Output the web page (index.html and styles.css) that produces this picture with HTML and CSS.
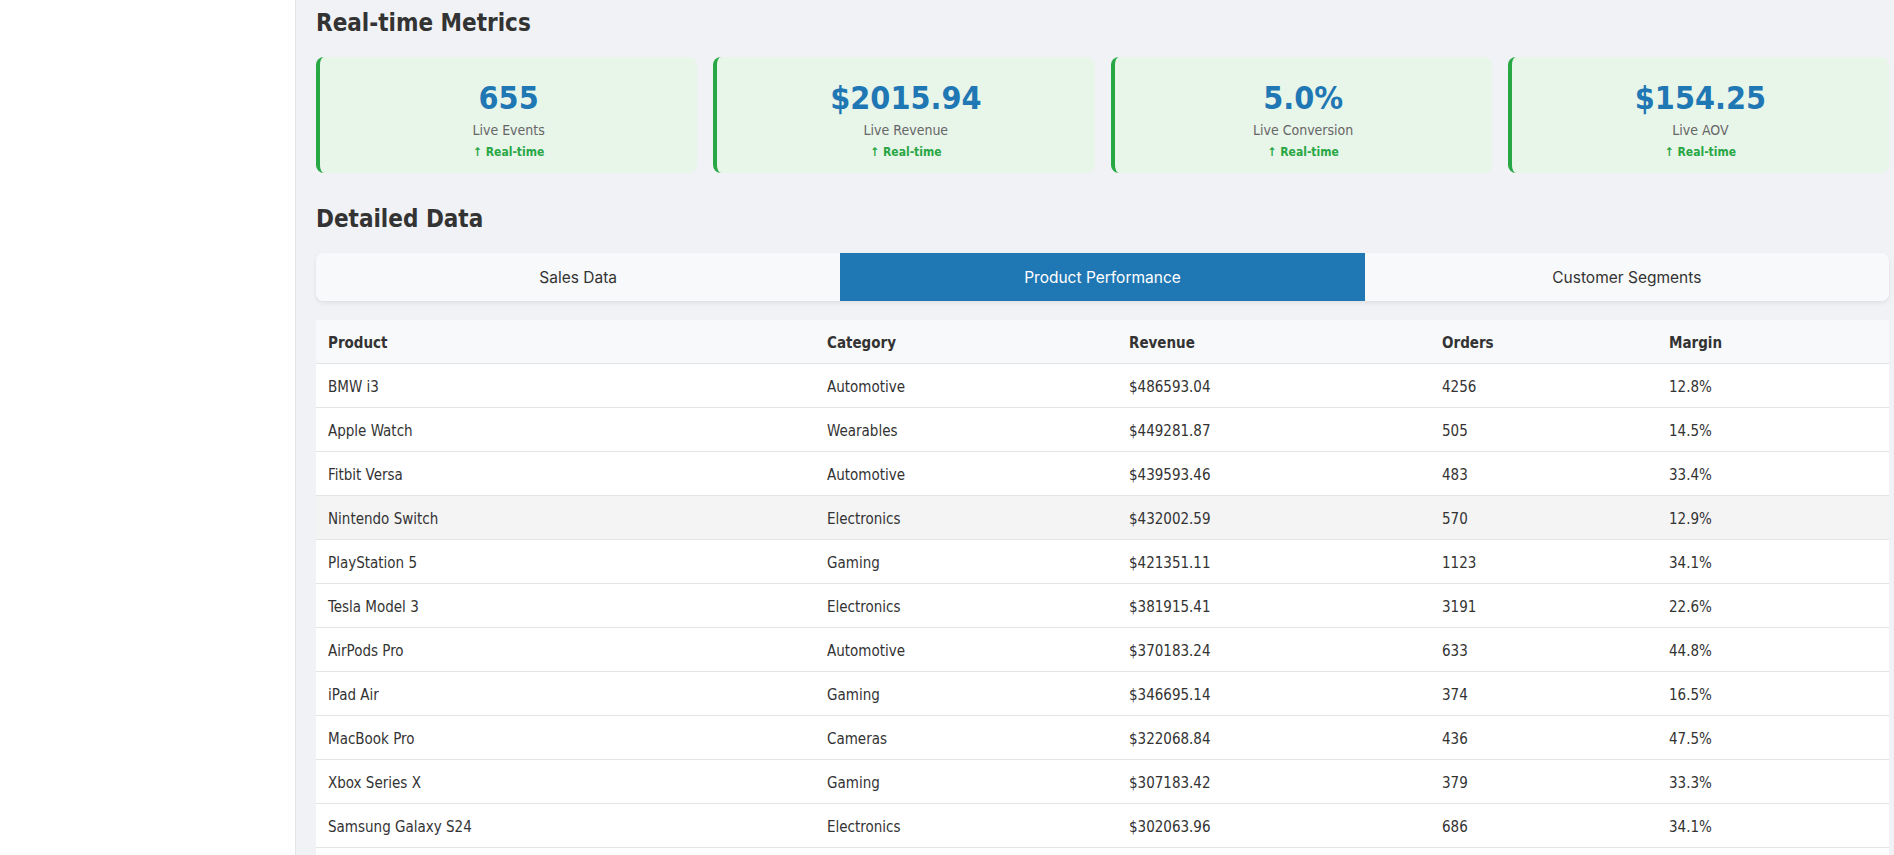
FILE: index.html
```html
<!DOCTYPE html>
<html lang="en">
<head>
<meta charset="utf-8">
<title>Real-time Dashboard</title>
<link rel="stylesheet" href="styles.css">
</head>
<body>
<div class="app">
  <aside class="sidebar"></aside>
  <main class="main">
    <h2 class="section-title first">Real-time Metrics</h2>
    <div class="metrics">
      <div class="metric-card">
        <div class="metric-value">655</div>
        <div class="metric-label">Live Events</div>
        <div class="metric-change">↑ Real-time</div>
      </div>
      <div class="metric-card">
        <div class="metric-value">$2015.94</div>
        <div class="metric-label">Live Revenue</div>
        <div class="metric-change">↑ Real-time</div>
      </div>
      <div class="metric-card">
        <div class="metric-value">5.0%</div>
        <div class="metric-label">Live Conversion</div>
        <div class="metric-change">↑ Real-time</div>
      </div>
      <div class="metric-card">
        <div class="metric-value">$154.25</div>
        <div class="metric-label">Live AOV</div>
        <div class="metric-change">↑ Real-time</div>
      </div>
    </div>

    <h2 class="section-title">Detailed Data</h2>
    <div class="tabs">
      <button class="tab">Sales Data</button>
      <button class="tab active">Product Performance</button>
      <button class="tab">Customer Segments</button>
    </div>

    <div class="table-wrap">
      <table class="data-table">
        <thead>
          <tr>
            <th class="c-product">Product</th>
            <th class="c-category">Category</th>
            <th class="c-revenue">Revenue</th>
            <th class="c-orders">Orders</th>
            <th class="c-margin">Margin</th>
          </tr>
        </thead>
        <tbody>
          <tr><td>BMW i3</td><td>Automotive</td><td>$486593.04</td><td>4256</td><td>12.8%</td></tr>
          <tr><td>Apple Watch</td><td>Wearables</td><td>$449281.87</td><td>505</td><td>14.5%</td></tr>
          <tr><td>Fitbit Versa</td><td>Automotive</td><td>$439593.46</td><td>483</td><td>33.4%</td></tr>
          <tr class="hover"><td>Nintendo Switch</td><td>Electronics</td><td>$432002.59</td><td>570</td><td>12.9%</td></tr>
          <tr><td>PlayStation 5</td><td>Gaming</td><td>$421351.11</td><td>1123</td><td>34.1%</td></tr>
          <tr><td>Tesla Model 3</td><td>Electronics</td><td>$381915.41</td><td>3191</td><td>22.6%</td></tr>
          <tr><td>AirPods Pro</td><td>Automotive</td><td>$370183.24</td><td>633</td><td>44.8%</td></tr>
          <tr><td>iPad Air</td><td>Gaming</td><td>$346695.14</td><td>374</td><td>16.5%</td></tr>
          <tr><td>MacBook Pro</td><td>Cameras</td><td>$322068.84</td><td>436</td><td>47.5%</td></tr>
          <tr><td>Xbox Series X</td><td>Gaming</td><td>$307183.42</td><td>379</td><td>33.3%</td></tr>
          <tr><td>Samsung Galaxy S24</td><td>Electronics</td><td>$302063.96</td><td>686</td><td>34.1%</td></tr>
          <tr class="empty"><td></td><td></td><td></td><td></td><td></td></tr>
        </tbody>
      </table>
    </div>
  </main>
</div>
</body>
</html>
```

FILE: styles.css
```css
* {
  box-sizing: border-box;
}

html, body {
  margin: 0;
  padding: 0;
  height: 100%;
  overflow: hidden;
}

body {
  font-family: "DejaVu Sans Condensed", "DejaVu Sans", sans-serif;
  font-size: 16px;
  color: #333;
  background: #ffffff;
}

.app {
  display: flex;
  min-height: 100%;
}

.sidebar {
  width: 296px;
  flex: 0 0 296px;
  background: #ffffff;
  border-right: 1px solid #e3e5e8;
}

.main {
  flex: 1;
  background: #f0f2f5;
  padding: 6px 5px 0 20px;
  min-width: 0;
}

.section-title {
  font-size: 24px;
  line-height: 29px;
  font-weight: bold;
  color: #333;
  padding-top: 3px;
  margin: 29px 0 19px;
}

.section-title.first {
  margin-top: 0;
}

.metrics {
  display: grid;
  grid-template-columns: repeat(4, 1fr);
  gap: 16px;
}

.metric-card {
  background: #e8f5e9;
  border-left: 4px solid #28a745;
  border-radius: 8px;
  height: 116px;
  padding: 22px 20px 0;
  text-align: center;
}

.metric-value {
  font-size: 32px;
  line-height: 38px;
  font-weight: bold;
  color: #1f77b4;
}

.metric-label {
  font-size: 14px;
  line-height: 17px;
  color: #666;
  margin-top: 5px;
}

.metric-change {
  font-size: 12px;
  line-height: 15px;
  font-weight: bold;
  color: #28a745;
  margin-top: 6px;
}

.tabs {
  display: flex;
  background: #f8f9fa;
  border-radius: 8px;
  overflow: hidden;
  box-shadow: 0 2px 4px rgba(0, 0, 0, 0.08);
  margin-bottom: 19px;
}

.tab {
  flex: 1;
  border: none;
  background: #f8f9fa;
  color: #333;
  font-family: "Inter", "Liberation Sans", sans-serif;
  font-size: 15.5px;
  line-height: 18px;
  padding: 16px 10px 14px;
  cursor: pointer;
}

.tab.active {
  background: #1f77b4;
  color: #ffffff;
}

.table-wrap {
  background: #ffffff;
  border-radius: 4px 4px 0 0;
  overflow: hidden;
}

.data-table {
  width: 100%;
  border-collapse: collapse;
  table-layout: fixed;
}

.data-table th,
.data-table td {
  text-align: left;
  padding: 14px 12px 10px;
  line-height: 19px;
  border-bottom: 1px solid #e2e4e7;
  font-size: 15px;
  white-space: nowrap;
}

.data-table th {
  background: #f8f9fa;
  font-weight: bold;
  color: #333;
}

.data-table tr.hover td {
  background: #f4f4f5;
}

.data-table tr.empty td {
  height: 44px;
}

.c-product { width: 499px; }
.c-category { width: 302px; }
.c-revenue { width: 313px; }
.c-orders { width: 227px; }
.c-margin { width: auto; }
```
